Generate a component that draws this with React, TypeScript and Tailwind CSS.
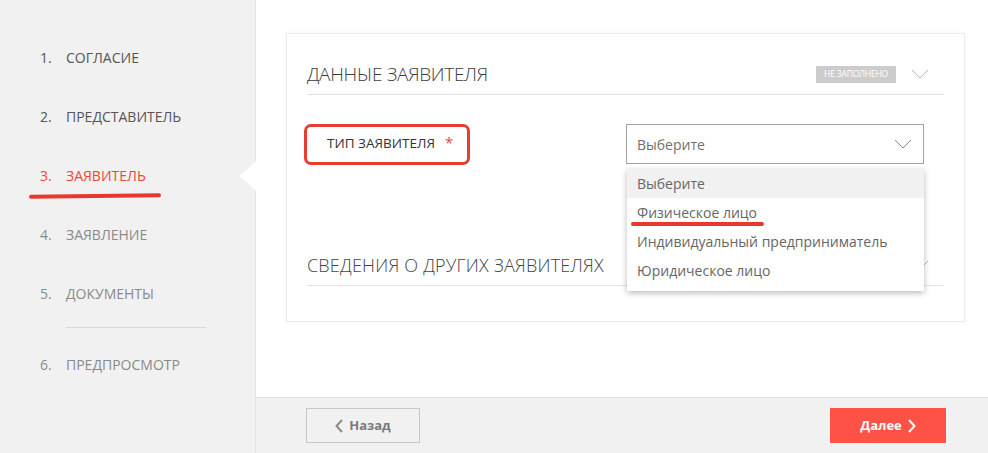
const steps = [
  { n: '1.', label: 'СОГЛАСИЕ', state: 'done' },
  { n: '2.', label: 'ПРЕДСТАВИТЕЛЬ', state: 'done' },
  { n: '3.', label: 'ЗАЯВИТЕЛЬ', state: 'active' },
  { n: '4.', label: 'ЗАЯВЛЕНИЕ', state: 'todo' },
  { n: '5.', label: 'ДОКУМЕНТЫ', state: 'todo' },
];

const options = ['Выберите', 'Физическое лицо', 'Индивидуальный предприниматель', 'Юридическое лицо'];

const Chevron = ({ className, color = '#b8b8b8' }: { className?: string; color?: string }) => (
  <svg className={className} width="18" height="10" viewBox="0 0 18 10" fill="none">
    <path d="M1 1l8 8 8-8" stroke={color} strokeWidth="1" />
  </svg>
);

const StepItem = ({ n, label, state }: { n: string; label: string; state: string }) => (
  <div
    className={
      'relative flex h-[59px] items-center text-[14px] ' +
      (state === 'active' ? 'text-[#f2443a]' : state === 'done' ? 'text-[#555555]' : 'text-[#8a8a8a]')
    }
  >
    <span className="w-[26px]">{n}</span>
    <span>{label}</span>
    {/* hand-drawn marker under the active step */}
    {state === 'active' && (
      <div className="absolute left-[-11px] top-[48px] h-[4px] w-[132px] -rotate-[0.6deg] rounded-full bg-[#e8372d]" />
    )}
  </div>
);

const SectionHeader = ({ title, light, badge }: { title: string; light?: boolean; badge?: boolean }) => (
  <div className="border-b border-[#e3e3e3] pt-[26px] pb-[6px]">
    <div className="flex h-[28px] items-center">
      <h2
        className={
          light
            ? 'text-[19px] font-light tracking-[-0.3px] text-[#3c3c3c]'
            : 'text-[18px] font-light tracking-[0.2px] text-[#444444]'
        }
      >
        {title}
      </h2>
      <div className="ml-auto flex items-center">
        {badge && (
          <span className="flex h-[17px] w-[80px] items-center justify-center bg-[#cccccc] text-[8.5px] tracking-[-0.2px] text-white">
            НЕ ЗАПОЛНЕНО
          </span>
        )}
        <Chevron className="ml-[15px] mr-[15px]" />
      </div>
    </div>
  </div>
);

export default function App() {
  return (
    <div className="flex h-[453px] w-[988px] overflow-hidden font-['Open_Sans',sans-serif]">
      {/* Sidebar */}
      <aside className="relative w-[256px] shrink-0 border-r border-[#e4e4e4] bg-[#f1f1f1] pl-[40px] pt-[28px]">
        {steps.map((s) => (
          <StepItem key={s.n} {...s} />
        ))}
        <div className="ml-[26px] mt-[4px] h-px w-[140px] bg-[#d9d9d9]" />
        <div className="mt-[7px]">
          <StepItem n="6." label="ПРЕДПРОСМОТР" state="todo" />
        </div>
        <div className="absolute right-[-1px] top-[161px] h-0 w-0 border-y-[15px] border-r-[16px] border-y-transparent border-r-white" />
      </aside>

      {/* Main */}
      <main className="flex flex-1 flex-col">
        <div className="flex-1 bg-white pl-[30px] pr-[23px] pt-[33px]">
          <div className="border border-[#ececec] px-[20px] pb-[35px] shadow-[0_0_3px_rgba(0,0,0,0.05)]">
            <SectionHeader title="ДАННЫЕ ЗАЯВИТЕЛЯ" light badge />

            <div className="mt-[29px] flex items-start pr-[20px]">
              <div className="ml-[-3px] h-[41px] w-[166px] rounded-[7px] border-[3px] border-[#e53d30] pl-[20px] pt-[6px] text-[13.5px] leading-[18px] text-[#333333]">
                ТИП ЗАЯВИТЕЛЯ
                <span className="ml-[10px] text-[15px] text-[#f2443a]">*</span>
              </div>

              <div className="relative ml-auto w-[298px]">
                <div className="flex h-[40px] items-center border border-[#a3a3a3] bg-white pl-[10px] pr-[11px] text-[14px] text-[#707070]">
                  Выберите
                  <Chevron className="ml-auto" color="#8a8a8a" />
                </div>
                {/* open dropdown */}
                <ul className="absolute left-[1px] top-[45px] z-10 w-[297px] bg-white pb-[6px] text-[14px] text-[#666666] shadow-[0_2px_6px_rgba(0,0,0,0.28)]">
                  {options.map((o, i) => (
                    <li
                      key={o}
                      className={
                        'relative flex h-[29px] items-center pl-[10px] ' + (i === 0 ? 'bg-[#f1f1f1]' : '')
                      }
                    >
                      {o}
                      {i === 1 && (
                        <div className="absolute left-[4px] top-[24px] h-[4px] w-[133px] rounded-full bg-[#e8372d]" />
                      )}
                    </li>
                  ))}
                </ul>
              </div>
            </div>

            <div className="mt-[60px]">
              <SectionHeader title="СВЕДЕНИЯ О ДРУГИХ ЗАЯВИТЕЛЯХ" />
            </div>
          </div>
        </div>

        {/* Footer */}
        <footer className="flex h-[56px] shrink-0 items-center border-t border-[#e2e2e2] bg-[#f1f1f1] pl-[50px] pr-[42px]">
          <button className="flex h-[35px] w-[114px] items-center justify-center gap-[6px] border border-[#c8c8c8] text-[13px] font-bold text-[#7a7a7a]">
            <svg width="8" height="14" viewBox="0 0 8 14" fill="none">
              <path d="M7 1L1.5 7 7 13" stroke="#8a8a8a" strokeWidth="2" />
            </svg>
            Назад
          </button>
          <button className="ml-auto flex h-[35px] w-[116px] items-center justify-center gap-[6px] bg-[#ff5246] text-[13px] font-bold text-white">
            Далее
            <svg width="8" height="14" viewBox="0 0 8 14" fill="none">
              <path d="M1 1l5.5 6L1 13" stroke="#ffffff" strokeWidth="2" />
            </svg>
          </button>
        </footer>
      </main>
    </div>
  );
}
